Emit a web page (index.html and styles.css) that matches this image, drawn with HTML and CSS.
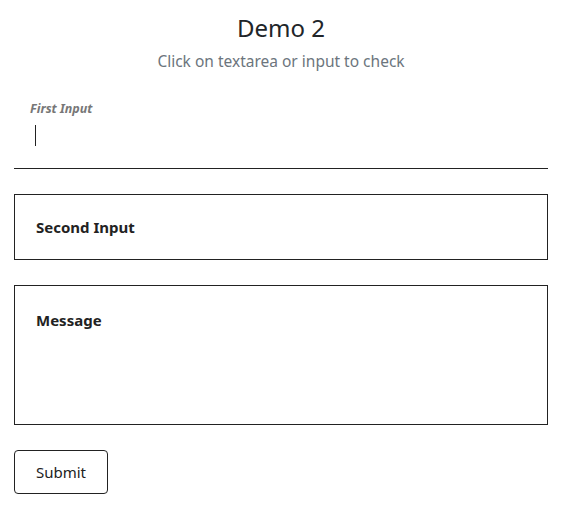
FILE: index.html
```html
<!DOCTYPE html>
<html lang="en">
<head>
    <meta charset="UTF-8">
    <meta name="viewport" content="width=device-width, initial-scale=1.0">
    <title>Demo 2</title>
    <link rel="stylesheet" href="styles.css">
</head>
<body>
    <div class="container">
        <h1>Demo 2</h1>
        <p class="lead">Click on textarea or input to check</p>

        <form class="demo-form" onsubmit="return false">
            <div class="field field-line is-active">
                <label for="firstInput">First Input</label>
                <input type="text" id="firstInput">
                <span class="caret"></span>
            </div>
            <div class="field field-box">
                <input type="text" id="secondInput" placeholder="Second Input">
            </div>
            <div class="field field-box">
                <textarea id="message" placeholder="Message"></textarea>
            </div>
            <button type="submit">Submit</button>
        </form>
    </div>
</body>
</html>
```
FILE: styles.css
```css
body { margin: 0; font-family: "Noto Sans", "Open Sans", sans-serif; color: #212529; background: #fff; }
.container { width: 534px; margin-left: 14px; padding-top: 12px; }
h1 { margin: 0; font-size: 24px; font-weight: 400; text-align: center; line-height: 32px; }
.lead { margin: 6px 0 0; font-size: 15.5px; color: #6c757d; text-align: center; line-height: 22px; }

.demo-form { display: flex; flex-direction: column; gap: 25px; margin-top: 29px; }
.field { position: relative; }

.field-line { height: 67px; border-bottom: 1px solid #222; }
.field-line label { display: block; padding-left: 16px; font-size: 12.5px; font-weight: 700; font-style: italic; color: #777; line-height: 16px; }
.field-line input { width: 100%; box-sizing: border-box; border: 0; outline: 0; padding: 0 21px; height: 30px; font: inherit; background: transparent; }
.caret { position: absolute; left: 21px; top: 24px; width: 1px; height: 21px; background: #222; }

.field-box input, .field-box textarea { display: block; width: 100%; box-sizing: border-box; border: 1px solid #222; outline: 0; padding: 0 21px; font: inherit; font-size: 15px; background: #fff; resize: none; }
.field-box input { height: 66px; }
.field-box textarea { height: 140px; padding-top: 24px; }
.field-box ::placeholder { color: #222; font-weight: 700; opacity: 1; }

button { align-self: flex-start; width: 94px; height: 44px; border: 1px solid #222; border-radius: 4px; background: #fff; font: inherit; font-size: 15px; color: #222; cursor: pointer; }
button:hover { background: #f4f4f4; }
```
